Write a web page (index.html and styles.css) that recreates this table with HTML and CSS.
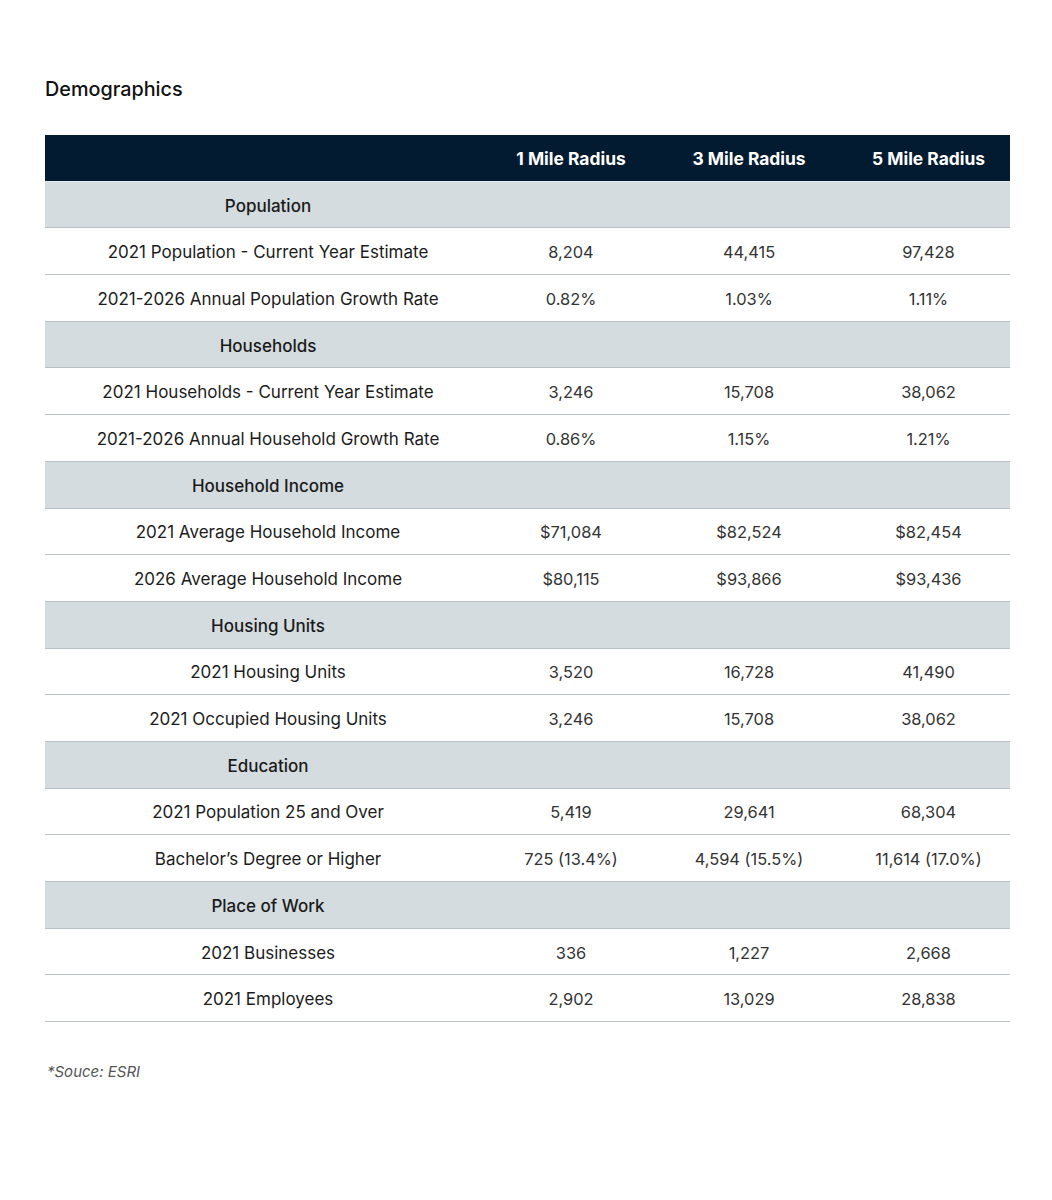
FILE: index.html
```html
<!DOCTYPE html>
<html>
<head>
<meta charset="utf-8">
<link rel="stylesheet" href="styles.css">
</head>
<body>
<div class="page">
  <h1 class="title">Demographics</h1>
  <div class="table">
    <div class="row head"><div></div><div>1 Mile Radius</div><div>3 Mile Radius</div><div>5 Mile Radius</div></div>
    <div class="row section"><div>Population</div><div></div><div></div><div></div></div>
    <div class="row"><div class="label">2021 Population - Current Year Estimate</div><div>8,204</div><div>44,415</div><div>97,428</div></div>
    <div class="row"><div class="label">2021-2026 Annual Population Growth Rate</div><div>0.82%</div><div>1.03%</div><div>1.11%</div></div>
    <div class="row section"><div>Households</div><div></div><div></div><div></div></div>
    <div class="row"><div class="label">2021 Households - Current Year Estimate</div><div>3,246</div><div>15,708</div><div>38,062</div></div>
    <div class="row"><div class="label">2021-2026 Annual Household Growth Rate</div><div>0.86%</div><div>1.15%</div><div>1.21%</div></div>
    <div class="row section"><div>Household Income</div><div></div><div></div><div></div></div>
    <div class="row"><div class="label">2021 Average Household Income</div><div>$71,084</div><div>$82,524</div><div>$82,454</div></div>
    <div class="row"><div class="label">2026 Average Household Income</div><div>$80,115</div><div>$93,866</div><div>$93,436</div></div>
    <div class="row section"><div>Housing Units</div><div></div><div></div><div></div></div>
    <div class="row"><div class="label">2021 Housing Units</div><div>3,520</div><div>16,728</div><div>41,490</div></div>
    <div class="row"><div class="label">2021 Occupied Housing Units</div><div>3,246</div><div>15,708</div><div>38,062</div></div>
    <div class="row section"><div>Education</div><div></div><div></div><div></div></div>
    <div class="row"><div class="label">2021 Population 25 and Over</div><div>5,419</div><div>29,641</div><div>68,304</div></div>
    <div class="row"><div class="label">Bachelor’s Degree or Higher</div><div>725 (13.4%)</div><div>4,594 (15.5%)</div><div>11,614 (17.0%)</div></div>
    <div class="row section"><div>Place of Work</div><div></div><div></div><div></div></div>
    <div class="row"><div class="label">2021 Businesses</div><div>336</div><div>1,227</div><div>2,668</div></div>
    <div class="row"><div class="label">2021 Employees</div><div>2,902</div><div>13,029</div><div>28,838</div></div>
  </div>
  <p class="note">*Souce: ESRI</p>
</div>
</body>
</html>
```
FILE: styles.css
```css
html, body {
  margin: 0;
  padding: 0;
  background: #ffffff;
}
.page {
  padding: 76px 42px 0 45px;
  font-family: Inter, "Liberation Sans", sans-serif;
  color: #1f1f1f;
}
.title {
  margin: 0;
  font-size: 19.8px;
  line-height: 26px;
  font-weight: 500;
  color: #111;
}
.table {
  margin-top: 33px;
  width: 965px;
}
.row {
  display: grid;
  grid-template-columns: 446px 160px 196px 163px;
  height: 46.7px;
  box-sizing: border-box;
  border-bottom: 1.5px solid #b9c1c6;
  align-items: center;
  text-align: center;
  font-size: 16.4px;
  color: #333;
  padding-top: 2px;
}
.row > div {
  white-space: nowrap;
}
.row .label {
  color: #1c1c1c;
  font-size: 17px;
}
.head {
  background: #031b31;
  color: #ffffff;
  font-weight: 700;
  font-size: 17.4px;
  border-bottom: 1.5px solid #e6eaec;
  padding-top: 1px;
}
.section {
  background: #d5dce0;
  color: #1a1a1a;
  font-weight: 500;
  font-size: 17px;
}
.note {
  margin: 40px 0 0 2px;
  font-size: 15px;
  font-style: italic;
  color: #555;
}
```
